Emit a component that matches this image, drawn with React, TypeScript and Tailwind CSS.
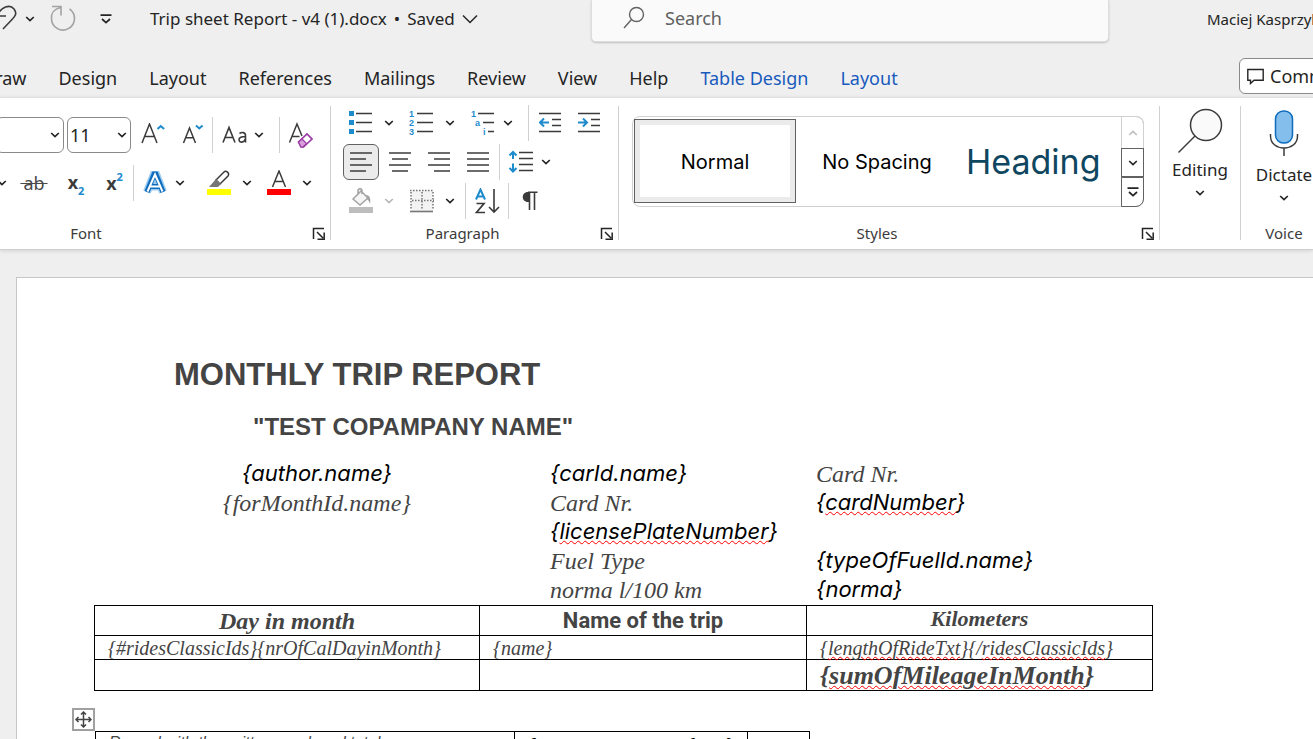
import type { ReactNode } from "react";

const UI = "font-['Noto_Sans','Open_Sans',sans-serif]";
const APTOS = "font-['Inter','Liberation_Sans',sans-serif]";
const TIMES = "font-['Liberation_Serif',serif]";

function Chevron({ className = "text-[#242424]" }: { className?: string }) {
  return (
    <svg width="10" height="6" viewBox="0 0 10 6" fill="none" stroke="currentColor" strokeWidth="1.7" className={className} aria-hidden="true">
      <path d="M1.2 1 5 4.6 8.8 1" />
    </svg>
  );
}

function Tool({ label, className, children }: { label: string; className: string; children: ReactNode }) {
  return (
    <button type="button" aria-label={label} className={`flex h-9 shrink-0 items-center justify-center ${className}`}>
      {children}
    </button>
  );
}

function Rule({ className = "" }: { className?: string }) {
  return <span className={`h-9 w-px shrink-0 bg-[#d1d1d1] ${className}`} />;
}

function GroupRule() {
  return <span className="mt-2 h-[134px] w-px shrink-0 bg-[#d1d1d1]" />;
}

function GroupFooter({ name, className = "" }: { name: string; className?: string }) {
  return (
    <div className="grid h-6 grid-cols-[1fr_24px] items-center">
      <span className={`pb-[2px] text-center text-[15px] leading-[22px] text-[#3b3b3b] ${className}`}>{name}</span>
      <button type="button" aria-label={`${name} settings`} className="flex justify-end pr-1">
        <svg width="14" height="14" viewBox="0 0 14 14" fill="none" stroke="#242424" strokeWidth="1.5" aria-hidden="true">
          <path d="M1.5 12V1.500H12M5 5l6 6M12.200 5.500v6.700H5.500" />
        </svg>
      </button>
    </div>
  );
}

function Lines({ rows }: { rows: [number, number][] }) {
  return (
    <svg width="22" height="22" viewBox="0 0 22 22" stroke="#3b3b3b" strokeWidth="1.5" aria-hidden="true">
      {rows.map(([a, b], i) => (
        <path key={i} d={`M${a} ${2 + i * 6}H${b}`} />
      ))}
    </svg>
  );
}

function Indent({ inward }: { inward: boolean }) {
  return (
    <svg width="22" height="22" viewBox="0 0 22 22" fill="none" stroke="#3b3b3b" strokeWidth="1.5" aria-hidden="true">
      <path d="M0 1.500h22M13 7.500h9M13 13.500h9M0 19.500h22" />
      <path d={inward ? "M0 10.500h9M5 6.500l4 4-4 4" : "M10 10.500H1M5 6.500l-4 4 4 4"} stroke="#1e8bcd" strokeWidth="2" />
    </svg>
  );
}

function TitleBar() {
  return (
    <header className="flex h-[45px] items-start">
      <div className="flex h-[38px] w-[591px] shrink-0 items-center overflow-hidden">
        <button type="button" aria-label="Undo" className="-ml-2">
          <svg width="28" height="28" viewBox="0 0 28 28" fill="none" stroke="#3b3b3b" strokeWidth="1.6" aria-hidden="true">
            <path d="M4 1v10h10M5 11C9 1.500 18-1 22 4 25.500 8.500 23 11.500 20 14.500L11 24" />
          </svg>
        </button>
        <button type="button" aria-label="Undo history" className="ml-1 p-px"><Chevron /></button>
        <button type="button" aria-label="Redo" className="ml-3">
          <svg width="28" height="28" viewBox="0 0 28 28" fill="none" stroke="#a3a3a3" strokeWidth="1.6" aria-hidden="true">
            <path d="M4 1.500h9v9M12.500 2.500C6 4 3 8.500 3.500 13.500a11.500 11.500 0 1 0 18-9.500" />
          </svg>
        </button>
        <button type="button" aria-label="Customize quick access" className="ml-6">
          <svg width="12" height="10" viewBox="0 0 12 10" fill="none" stroke="#242424" strokeWidth="1.700" aria-hidden="true">
            <path d="M.5 1.200h11M2 5l4 3.600L10 5" />
          </svg>
        </button>
        <button type="button" className="ml-[38px] flex items-center gap-[7px] text-[17px] whitespace-nowrap text-[#242424]">
          <span>Trip sheet Report - v4 (1).docx</span>
          <span>•</span>
          <span>Saved</span>
          <svg width="16" height="10" viewBox="0 0 16 10" fill="none" stroke="#242424" strokeWidth="1.500" aria-hidden="true">
            <path d="m1 1.500 7 7 7-7" />
          </svg>
        </button>
      </div>
      <label className="flex h-[42px] flex-1 items-center rounded-b-[5px] border border-t-0 border-[#dedede] bg-[#fafafa] pb-[5px] pl-[31px] shadow-[0_1px_2px_rgba(0,0,0,0.2)]">
        <svg width="22" height="24" viewBox="0 0 22 24" fill="none" stroke="#616161" strokeWidth="1.400" aria-hidden="true">
          <circle cx="13.500" cy="8.500" r="7" />
          <path d="M8.500 13.500 1 22" />
        </svg>
        <input type="search" aria-label="Search" placeholder="Search" className="ml-5 min-w-0 flex-1 bg-transparent text-[18px] outline-none placeholder:text-[#616161]" />
      </label>
      <div className="h-[38px] w-[204px] shrink-0 pl-[98px] text-[15px] leading-[38px] whitespace-nowrap text-[#242424]">Maciej Kasprzyk</div>
    </header>
  );
}

const TABS = ["Draw", "Design", "Layout", "References", "Mailings", "Review", "View", "Help"];

function TabBar() {
  return (
    <nav className="flex h-[52px] items-start pt-[13px]">
      <div className="-ml-[18px] flex h-9 min-w-0 flex-1 items-center gap-8 pt-1 text-[18px] whitespace-nowrap text-[#242424]">
        {TABS.map((t) => (
          <button key={t} type="button">{t}</button>
        ))}
        <button type="button" className="text-[#185abd]">Table Design</button>
        <button type="button" className="text-[#185abd]">Layout</button>
      </div>
      <button type="button" className="-mr-[58px] flex h-9 w-[132px] shrink-0 items-center gap-[6px] rounded-md border border-[#8a8a8a] bg-white pl-[7px] text-[18px] text-[#242424]">
        <svg width="17" height="17" viewBox="0 0 17 17" fill="none" stroke="#242424" strokeWidth="1.400" aria-hidden="true">
          <path d="M.8 1.500h15.400v10.700H7L3.500 15.500v-3.300H.8z" />
        </svg>
        Comments
      </button>
    </nav>
  );
}

function FontGroup() {
  return (
    <section aria-label="Font" className="flex w-[330px] shrink-0 flex-col">
      <div className="mt-[19px] flex">
        <div className="-ml-1 grid h-9 w-[68px] shrink-0 items-center rounded-md border border-[#8a8a8a]">
          <select aria-label="Font name" className="col-start-1 row-start-1 h-full w-full appearance-none bg-transparent" defaultValue="">
            <option value=""></option>
          </select>
          <span className="pointer-events-none col-start-1 row-start-1 mr-[3px] justify-self-end"><Chevron /></span>
        </div>
        <div className="ml-[3px] grid h-9 w-16 shrink-0 items-center rounded-md border border-[#8a8a8a]">
          <select aria-label="Font size" className="col-start-1 row-start-1 h-full w-full appearance-none bg-transparent pl-[2px] text-[18px] text-[#242424]" defaultValue="11">
            <option>11</option>
            <option>12</option>
          </select>
          <span className="pointer-events-none col-start-1 row-start-1 mr-[3px] justify-self-end"><Chevron /></span>
        </div>
        <Tool label="Increase font size" className="w-11">
          <svg width="24" height="24" viewBox="0 0 24 24" fill="none" stroke="#3b3b3b" strokeWidth="1.500" aria-hidden="true">
            <path d="M1 20 8.500 1l7.500 19M3.700 13.500h9.700" />
            <path d="m16.500 6 3.300-3 3.300 3" stroke="#1e8bcd" strokeWidth="2" />
          </svg>
        </Tool>
        <Tool label="Decrease font size" className="w-9">
          <svg width="22" height="24" viewBox="0 0 22 24" fill="none" stroke="#3b3b3b" strokeWidth="1.500" aria-hidden="true">
            <path d="M1.500 20 7.500 5l6 15M3.700 14.700h7.700" />
            <path d="m14 2.500 3.300 3 3.300-3" stroke="#1e8bcd" strokeWidth="2" />
          </svg>
        </Tool>
        <Rule className="ml-px" />
        <Tool label="Change case" className="w-[66px] gap-[6px] pr-[6px]">
          <svg width="26" height="22" viewBox="0 0 26 22" fill="none" stroke="#3b3b3b" strokeWidth="1.600" aria-hidden="true">
            <path d="M1 18.500 7 3.500l6 15M3.200 13.500h7.600M17.500 9.500c2-1.500 6-1.500 6 2v7M23.500 12.500c-4 .3-6.500.6-6.500 3.100 0 3.600 5.300 3.300 6.500-.8" />
          </svg>
          <Chevron />
        </Tool>
        <Rule />
        <Tool label="Clear formatting" className="w-[42px]">
          <svg width="26" height="26" viewBox="0 0 26 26" fill="none" stroke="#3b3b3b" strokeWidth="1.500" aria-hidden="true">
            <path d="M1.500 20.500 9 2l5 12M4.500 14.500h7" />
            <path d="m10.500 20 8.500-8 5 5-8.500 8h-2.500z" fill="#fff" stroke="#9c3aa5" strokeWidth="1.700" />
            <path d="m14 17 4.500 4.500-3.500 3.500h-2l-2.500-5z" fill="#d9a0dd" stroke="#9c3aa5" strokeWidth="1.200" />
          </svg>
        </Tool>
      </div>
      <div className="mt-3 -ml-2 flex">
        <Tool label="Underline style" className="w-5"><Chevron /></Tool>
        <Tool label="Strikethrough" className="w-11">
          <span className="text-[18px] text-[#4a4a4a] line-through decoration-1">&thinsp;ab&thinsp;</span>
        </Tool>
        <Tool label="Subscript" className="w-10 text-[18px] font-bold text-[#3b3b3b]">
          <span className="leading-6">x<span className="align-[-6px] text-[11px] leading-none text-[#1e8bcd]">2</span></span>
        </Tool>
        <Tool label="Superscript" className="w-[37px] text-[18px] font-bold text-[#3b3b3b]">
          <span className="leading-6">x<span className="align-[9px] text-[11px] leading-none text-[#1e8bcd]">2</span></span>
        </Tool>
        <Rule />
        <Tool label="Text effects" className="w-[60px] gap-2">
          <svg width="24" height="24" viewBox="0 0 24 24" fill="none" aria-hidden="true">
            <path d="M4 21 11 3h2l7 18M7.500 15.500h9" stroke="#9ccbf0" strokeWidth="8" />
            <path d="M4 21 11.200 3h1.600L20 21M7.500 15.500h9" stroke="#0f6cbd" strokeWidth="5.200" />
            <path d="M4.500 20.500 12 3.500l7.500 17M7.500 15.500h9" stroke="#fff" strokeWidth="2" />
          </svg>
          <Chevron />
        </Tool>
        <Tool label="Highlight color" className="ml-[11px] w-12 gap-[11px]">
          <svg width="24" height="26" viewBox="0 0 24 26" aria-hidden="true">
            <path d="M0 19h24v6H0z" fill="#ff0" />
            <path d="M9 10 17 2c2-2 6 1 4 4l-8 8z" fill="#fff" stroke="#3b3b3b" strokeWidth="1.500" />
            <path d="m9 9 5 5-3 3H2z" fill="#767676" />
          </svg>
          <Chevron />
        </Tool>
        <Tool label="Font color" className="ml-3 w-12 gap-[11px]">
          <svg width="24" height="26" viewBox="0 0 24 26" fill="none" aria-hidden="true">
            <path d="M0 19h24v6H0z" fill="#f00" />
            <path d="m5.500 17 6.500-16 6.500 16M8 11.500h8" stroke="#3b3b3b" strokeWidth="1.500" />
          </svg>
          <Chevron />
        </Tool>
      </div>
      <div className="mt-[21px]"><GroupFooter name="Font" className="pr-[134px]" /></div>
    </section>
  );
}

function ParagraphGroup() {
  return (
    <section aria-label="Paragraph" className="flex w-[287px] shrink-0 flex-col">
      <div className="mt-[7px] flex pl-[17px]">
        <Tool label="Bullets" className="w-[26px]">
          <svg width="26" height="24" viewBox="0 0 26 24" aria-hidden="true">
            <path d="M1 0h5v5H1zM1 9h5v5H1zM1 18h5v5H1z" fill="#1e8bcd" />
            <path d="M8 2.500h16M8 11.500h16M8 20.500h16" stroke="#3b3b3b" strokeWidth="1.500" />
          </svg>
        </Tool>
        <Tool label="Bullet styles" className="w-[30px]"><Chevron /></Tool>
        <Tool label="Numbering" className="ml-[5px] w-[26px]">
          <svg width="26" height="26" viewBox="0 0 26 26" aria-hidden="true">
            <g className="fill-[#1e8bcd] font-['Liberation_Sans',sans-serif] text-[9px] font-bold">
              <text x="0" y="7">1</text>
              <text x="0" y="16">2</text>
              <text x="0" y="25">3</text>
            </g>
            <path d="M8 3.500h16M8 12.500h16M8 21.500h16" stroke="#3b3b3b" strokeWidth="1.500" />
          </svg>
        </Tool>
        <Tool label="Numbering styles" className="w-[30px]"><Chevron /></Tool>
        <Tool label="Multilevel list" className="ml-[5px] w-[26px]">
          <svg width="26" height="26" viewBox="0 0 26 26" aria-hidden="true">
            <g className="fill-[#1e8bcd] font-['Liberation_Sans',sans-serif] text-[9px] font-bold">
              <text x="1" y="7">1</text>
              <text x="5" y="16">a</text>
              <text x="13" y="25">i</text>
            </g>
            <path d="M8 3.500h16M13 12.500h11M18 21.500h6" stroke="#3b3b3b" strokeWidth="1.500" />
          </svg>
        </Tool>
        <Tool label="Multilevel styles" className="w-6"><Chevron /></Tool>
        <Rule className="ml-2" />
        <Tool label="Decrease indent" className="w-[42px]"><Indent inward={false} /></Tool>
        <Tool label="Increase indent" className="w-9"><Indent inward /></Tool>
      </div>
      <div className="mt-[3px] flex pl-3">
        <Tool label="Align left" className="w-9 rounded-md border border-[#616161] bg-[#ebebeb]"><Lines rows={[[0, 22], [0, 16], [0, 22], [0, 16]]} /></Tool>
        <Tool label="Center" className="ml-[3px] w-9"><Lines rows={[[0, 22], [3, 19], [0, 22], [3, 19]]} /></Tool>
        <Tool label="Align right" className="ml-[3px] w-9"><Lines rows={[[0, 22], [6, 22], [0, 22], [6, 22]]} /></Tool>
        <Tool label="Justify" className="ml-[3px] w-9"><Lines rows={[[0, 22], [0, 22], [0, 22], [0, 22]]} /></Tool>
        <Rule className="ml-[3px]" />
        <Tool label="Line spacing" className="ml-2 w-[26px]">
          <svg width="26" height="24" viewBox="0 0 26 24" fill="none" aria-hidden="true">
            <path d="M11 2.500h14M11 8.500h14M11 14.500h14M11 20.500h14" stroke="#3b3b3b" strokeWidth="1.500" />
            <path d="M5 2v7M1.500 5.500 5 2 8.500 5.500M5 13.500v8M1.500 18 5 21.500 8.500 18" stroke="#1e8bcd" strokeWidth="2" />
          </svg>
        </Tool>
        <Tool label="Line spacing options" className="w-6"><Chevron /></Tool>
      </div>
      <div className="mt-[3px] flex pl-[17px]">
        <Tool label="Shading" className="w-[26px]">
          <svg width="26" height="26" viewBox="0 0 26 26" fill="none" aria-hidden="true">
            <path d="M1 19h24v6H1z" fill="#bdbdbd" />
            <path d="m5 11 8-8 7 7-8 7zM10 7V3c0-3 4-3 4 0v3" fill="#f5f5f5" stroke="#a3a3a3" strokeWidth="1.500" />
            <path d="M18 7c4 0 5 4 4 9-1-3-2-4-3-5z" fill="#a3a3a3" />
          </svg>
        </Tool>
        <Tool label="Shading colors" className="w-[30px]"><Chevron className="text-[#b8b8b8]" /></Tool>
        <Tool label="Borders" className="ml-[5px] w-[26px]">
          <svg width="26" height="24" viewBox="0 0 26 24" fill="none" stroke="#767676" aria-hidden="true">
            <path d="M2 1h22v21H2z" fill="#f3f3f3" stroke="none" />
            <path d="M1 1.500h24M2 3v18M24 3v18M13 3v18M3 11.500h22" strokeWidth="1.500" strokeDasharray="1.500 1.500" />
            <path d="M1 22.500h23" strokeWidth="1.600" />
          </svg>
        </Tool>
        <Tool label="Border styles" className="w-[30px]"><Chevron /></Tool>
        <Rule />
        <Tool label="Sort" className="w-[42px]">
          <svg width="26" height="26" viewBox="0 0 26 26" fill="none" aria-hidden="true">
            <path d="M2 11.500 6.500 1.500 11 11.500M3.500 8.500h6" stroke="#1e8bcd" strokeWidth="2" />
            <path d="M2.500 15.500h7.500L2.500 24.500H11" stroke="#3b3b3b" strokeWidth="1.700" />
            <path d="M20 1v23M15 19l5 5 5-5" stroke="#3b3b3b" strokeWidth="1.600" />
          </svg>
        </Tool>
        <Rule />
        <Tool label="Show paragraph marks" className="w-[42px]">
          <svg width="16" height="20" viewBox="0 0 16 20" fill="none" aria-hidden="true">
            <path d="M7.500 1H6C-1 1-1 11 6 11h1.500z" fill="#3b3b3b" />
            <path d="M6 1.200h9.500M7.500 1v18M12.500 1v18" stroke="#3b3b3b" strokeWidth="1.600" />
          </svg>
        </Tool>
      </div>
      <div className="mt-[3px]"><GroupFooter name="Paragraph" /></div>
    </section>
  );
}

function StylesGroup() {
  return (
    <section aria-label="Styles" className="flex w-[540px] shrink-0 flex-col">
      <div className="mt-[18px] mr-[15px] ml-[13px] flex h-[91px] rounded-lg border border-[#d1d1d1]">
        <div className={`flex min-w-0 flex-1 overflow-hidden text-black ${APTOS}`}>
          <button type="button" className="mt-[2px] ml-px h-[84px] w-[162px] shrink-0 border border-[#616161] bg-[#ebebeb] p-[5px]">
            <span className="flex h-full items-center justify-center bg-white pt-[2px] text-[20px]">Normal</span>
          </button>
          <button type="button" className="w-[162px] shrink-0 text-[20px] whitespace-nowrap">No Spacing</button>
          <button type="button" className="ml-2 w-[145px] shrink-0 overflow-hidden text-left text-[34px] whitespace-nowrap text-[#0f4761]">Heading 1</button>
        </div>
        <div className="-my-px -mr-px flex w-[23px] shrink-0 flex-col">
          <button type="button" aria-label="Previous styles" className="flex h-8 items-center justify-center rounded-tr-lg border border-b-0 border-[#d1d1d1]">
            <svg width="10" height="6" viewBox="0 0 10 6" fill="none" stroke="#bdbdbd" strokeWidth="1.500" aria-hidden="true"><path d="M1.200 5 5 1.400 8.800 5" /></svg>
          </button>
          <button type="button" aria-label="Next styles" className="flex h-[29px] items-center justify-center border border-[#616161]"><Chevron /></button>
          <button type="button" aria-label="More styles" className="flex h-[30px] items-center justify-center rounded-br-lg border border-[#616161]">
            <svg width="12" height="10" viewBox="0 0 12 10" fill="none" stroke="#242424" strokeWidth="1.700" aria-hidden="true"><path d="M.5 1.200h11M2 5l4 3.600L10 5" /></svg>
          </button>
        </div>
      </div>
      <div className="mt-[15px]"><GroupFooter name="Styles" /></div>
    </section>
  );
}

function Ribbon() {
  return (
    <div className="z-10 flex h-[153px] shrink-0 overflow-hidden border-y border-t-[#e0e0e0] border-b-[#cfcfcf] bg-white shadow-[0_1px_4px_rgba(0,0,0,0.12)]">
      <FontGroup />
      <GroupRule />
      <ParagraphGroup />
      <GroupRule />
      <StylesGroup />
      <GroupRule />
      <section aria-label="Editing" className="w-20 shrink-0">
        <button type="button" className="flex w-full flex-col items-center pt-[9px] text-[17px] leading-6 text-[#242424]">
          <svg width="46" height="48" viewBox="0 0 46 48" fill="none" stroke="#3b3b3b" strokeWidth="1.500" aria-hidden="true">
            <circle cx="29" cy="18" r="15.500" fill="#fafafa" />
            <path d="M18 29 1.500 45.500" />
          </svg>
          <span className="mt-[3px]">Editing</span>
          <span className="mt-2"><Chevron /></span>
        </button>
      </section>
      <GroupRule />
      <section aria-label="Voice" className="flex w-[86px] shrink-0 flex-col items-center">
        <button type="button" className="flex flex-col items-center pt-3 text-[17px] leading-6 text-[#242424]">
          <svg width="30" height="50" viewBox="0 0 30 50" fill="none" stroke="#3b3b3b" strokeWidth="1.500" aria-hidden="true">
            <rect x="6.500" y="1" width="17" height="32" rx="8" fill="#83beec" stroke="#0f6cbd" />
            <path d="M1.500 24v2c0 16 27 16 27 0v-2M15 38v8" />
          </svg>
          <span className="mt-[3px]">Dictate</span>
          <span className="mt-2"><Chevron /></span>
        </button>
        <span className="mt-5 text-[15px] leading-6 text-[#3b3b3b]">Voice</span>
      </section>
    </div>
  );
}

function Spell({ children }: { children: ReactNode }) {
  return <span className="underline decoration-[#f00] decoration-wavy decoration-1 underline-offset-1">{children}</span>;
}

function Field({ className = "", children }: { className?: string; children: ReactNode }) {
  return <p className={`pb-[2px] text-[22px] leading-[27px] text-black ${APTOS} ${className}`}>{children}</p>;
}

function Page() {
  const cell = "border border-black px-[13px] py-0";
  const detail = "border border-black px-[13px] pt-[2px] pb-0";
  return (
    <main className="flex-1 overflow-hidden bg-[#efefef] pt-[27px] pl-4">
      <article className="h-full border-t border-l border-[#c6c6c6] bg-white text-[#444]">
        <h1 className="pt-[77px] pl-[157px] font-['Liberation_Sans',sans-serif] text-[31px] leading-10 font-bold">MONTHLY TRIP REPORT</h1>
        <h2 className="pt-4 pl-[236px] font-['Liberation_Sans',sans-serif] text-[24px] leading-8 font-bold">"TEST COPAMPANY NAME"</h2>
        <div className={`mt-[17px] ml-[77px] grid grid-cols-[446px_256px_1fr] gap-x-[10px] text-[24px] leading-[29px] italic ${TIMES}`}>
          <div className="text-center">
            <Field>{"{author.name}"}</Field>
            <p>{"{forMonthId.name}"}</p>
          </div>
          <div>
            <Field>{"{carId.name}"}</Field>
            <p>Card Nr.</p>
            <Field>{"{"}<Spell>licensePlateNumber</Spell>{"}"}</Field>
            <p>Fuel Type</p>
            <p>norma l/100 km</p>
          </div>
          <div>
            <p>Card Nr.</p>
            <Field className="mb-[29px]">{"{"}<Spell>cardNumber</Spell>{"}"}</Field>
            <Field>{"{typeOfFuelId.name}"}</Field>
            <Field>{"{norma}"}</Field>
          </div>
        </div>
        <table className={`ml-[77px] w-[1059px] table-fixed border-collapse text-[20px] leading-[23px] italic ${TIMES}`}>
          <colgroup>
            <col className="w-[385px]" />
            <col className="w-[327px]" />
            <col />
          </colgroup>
          <thead>
            <tr className="h-[30px]">
              <th className={`${cell} pt-[2px] text-[24px]`}>Day in month</th>
              <th className={`${cell} font-['Roboto',sans-serif] text-[22px] not-italic`}>Name of the trip</th>
              <th className={`${cell} pb-1 text-[22px]`}>Kilometers</th>
            </tr>
          </thead>
          <tbody>
            <tr className="h-6 leading-[21px]">
              <td className={detail}>{"{#ridesClassicIds}{nrOfCalDayinMonth}"}</td>
              <td className={detail}>{"{name}"}</td>
              <td className={detail}>{"{"}<Spell>lengthOfRideTxt</Spell>{"}{/"}<Spell>ridesClassicIds</Spell>{"}"}</td>
            </tr>
            <tr className="h-[31px]">
              <td className={cell}></td>
              <td className={cell}></td>
              <td className={`${cell} text-[26px] font-bold`}>{"{"}<Spell>sumOfMileageInMonth</Spell>{"}"}</td>
            </tr>
          </tbody>
        </table>
        <button type="button" aria-label="Move table" className="mt-[17px] ml-[55px] flex h-[23px] w-[23px] items-center justify-center border-2 border-[#a0a0a0]">
          <svg width="17" height="17" viewBox="0 0 17 17" fill="none" stroke="#444" strokeWidth="1.500" aria-hidden="true">
            <path d="M8.500 1v15M1 8.500h15M6 3.500 8.500 1 11 3.500M6 13.500 8.500 16l2.500-2.500M3.500 6 1 8.500 3.500 11M13.500 6 16 8.500 13.500 11" />
          </svg>
        </button>
        <table className="ml-[78px] w-[715px] table-fixed border-collapse font-['Liberation_Sans',sans-serif] text-[16px] leading-6 italic">
          <colgroup>
            <col className="w-[419px]" />
            <col className="w-[233px]" />
            <col />
          </colgroup>
          <tbody>
            <tr className="h-[31px] align-top leading-5">
              <td className={`${cell} pt-px`}>Record with the written employed total</td>
              <td className={`${cell} pt-[3px] text-[17px] font-bold text-black`}>{"{averageusagesum.form}"}</td>
              <td className={cell}></td>
            </tr>
          </tbody>
        </table>
      </article>
    </main>
  );
}

export default function App() {
  return (
    <div className={`flex h-screen flex-col overflow-hidden bg-[#efefef] ${UI}`}>
      <TitleBar />
      <TabBar />
      <Ribbon />
      <Page />
    </div>
  );
}
